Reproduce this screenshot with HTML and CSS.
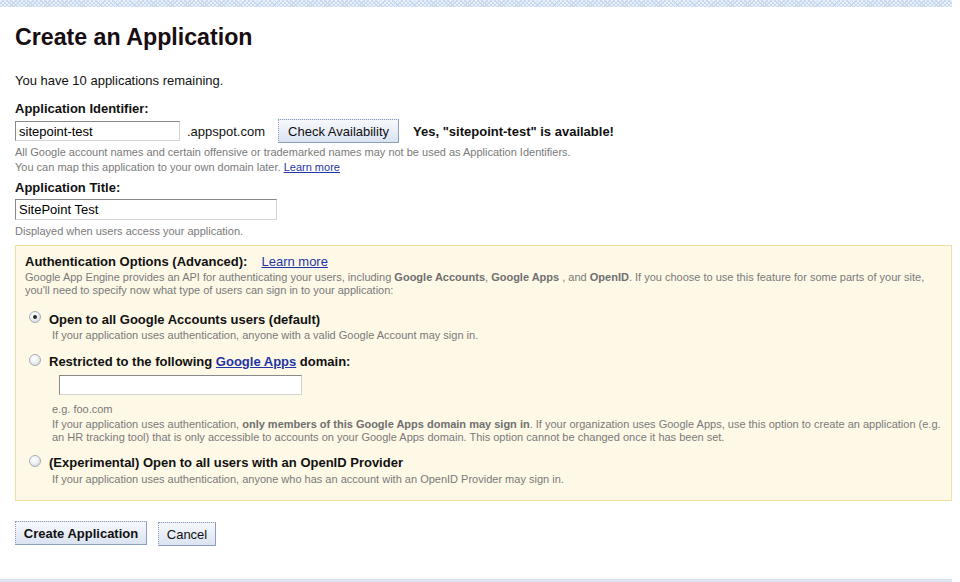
FILE: index.html
```html
<!DOCTYPE html>
<html lang="en">
<head>
<meta charset="utf-8">
<title>Create an Application</title>
<link rel="stylesheet" href="styles.css">
</head>
<body>
<div class="stripe"></div>
<main class="page">
  <h1 class="title">Create an Application</h1>
  <p class="remaining">You have 10 applications remaining.</p>

  <form class="form">
    <div class="field-label label-id">Application Identifier:</div>
    <div class="id-row">
      <input class="text-input id-input" type="text" value="sitepoint-test">
      <span class="suffix">.appspot.com</span>
      <button type="button" class="btn check-btn">Check Availability</button>
      <span class="available">Yes, "sitepoint-test" is available!</span>
    </div>
    <p class="hint hint-id">All Google account names and certain offensive or trademarked names may not be used as Application Identifiers.<br>You can map this application to your own domain later. <a href="#" class="link">Learn more</a></p>

    <div class="field-label label-title">Application Title:</div>
    <input class="text-input title-input" type="text" value="SitePoint Test">
    <p class="hint hint-title">Displayed when users access your application.</p>

    <section class="auth-box">
      <div class="auth-head"><span class="auth-title">Authentication Options (Advanced):</span><a href="#" class="link auth-learn">Learn more</a></div>
      <p class="auth-desc">Google App Engine provides an API for authenticating your users, including <b>Google Accounts</b>, <b>Google Apps</b> , and <b>OpenID</b>. If you choose to use this feature for some parts of your site,<br>you'll need to specify now what type of users can sign in to your application:</p>

      <div class="option opt-1">
        <span class="radio checked"></span>
        <span class="opt-label">Open to all Google Accounts users (default)</span>
      </div>
      <p class="opt-desc desc-1">If your application uses authentication, anyone with a valid Google Account may sign in.</p>

      <div class="option opt-2">
        <span class="radio"></span>
        <span class="opt-label">Restricted to the following <a href="#" class="link">Google Apps</a> domain:</span>
      </div>
      <input class="text-input domain-input" type="text" value="">
      <p class="opt-desc eg">e.g. foo.com</p>
      <p class="opt-desc desc-2">If your application uses authentication, <b>only members of this Google Apps domain may sign in</b>. If your organization uses Google Apps, use this option to create an application (e.g.<br>an HR tracking tool) that is only accessible to accounts on your Google Apps domain. This option cannot be changed once it has been set.</p>

      <div class="option opt-3">
        <span class="radio"></span>
        <span class="opt-label">(Experimental) Open to all users with an OpenID Provider</span>
      </div>
      <p class="opt-desc desc-3">If your application uses authentication, anyone who has an account with an OpenID Provider may sign in.</p>
    </section>

    <div class="actions">
      <button type="button" class="btn create-btn">Create Application</button>
      <button type="button" class="btn cancel-btn">Cancel</button>
    </div>
  </form>
  <div class="footer-band"></div>
</main>
</body>
</html>
```

FILE: styles.css
```css
* { box-sizing: border-box; }

html, body {
  margin: 0;
  padding: 0;
  background: #fff;
}

body {
  font-family: "Liberation Sans", Arial, sans-serif;
  font-size: 13px;
  line-height: 15px;
  color: #111;
  overflow: hidden;
}

.stripe {
  height: 7px;
  width: 952px;
  background-color: #eaf1fa;
  background-image:
    repeating-linear-gradient(45deg, #c6d9ee 0 1px, transparent 1px 3px),
    repeating-linear-gradient(-45deg, #c6d9ee 0 1px, transparent 1px 3px);
}

.page {
  width: 952px;
  padding-left: 15px;
}

.title {
  margin: 15px 0 0;
  font-size: 23.2px;
  line-height: 30px;
  font-weight: bold;
  color: #180d12;
}

.remaining {
  margin: 21px 0 0;
  color: #111;
}

.form { margin: 0; }

.field-label {
  font-weight: bold;
  color: #111;
}

.label-id { margin-top: 13px; }
.label-title { margin-top: 5px; }

.id-row {
  margin-top: 3px;
  height: 24px;
  display: flex;
  align-items: center;
}

.text-input {
  display: block;
  height: 20px;
  padding: 0 3px;
  margin: 0;
  font-family: "Liberation Sans", Arial, sans-serif;
  font-size: 13px;
  color: #000;
  background: #fff;
  border-style: solid;
  border-width: 1px;
  border-color: #8a8a8a #d4d4d4 #d4d4d4 #8a8a8a;
  border-radius: 0;
  outline: none;
}

.id-input { width: 165px; }

.suffix {
  margin-left: 7px;
  color: #111;
}

.btn {
  font-family: "Liberation Sans", Arial, sans-serif;
  font-size: 13px;
  color: #111;
  height: 24px;
  padding: 0;
  border: 1px solid #8d9dbd;
  border-top-style: dotted;
  border-left-style: dotted;
  border-radius: 0;
  background: linear-gradient(#f6f8fc 0%, #e9eef7 50%, #d9e3f0 100%);
  cursor: pointer;
}

.check-btn {
  width: 121px;
  margin-left: 13px;
}

.available {
  margin-left: 14px;
  font-weight: bold;
  color: #111;
}

.hint {
  margin: 2px 0 0;
  font-size: 11px;
  line-height: 15px;
  color: #7a7a7a;
}

.hint-title { margin-top: 4px; }

.link {
  color: #1f35a6;
  text-decoration: underline;
}

.title-input {
  width: 262px;
  height: 21px;
  margin-top: 4px;
}

.auth-box {
  margin-top: 6px;
  width: 937px;
  height: 256px;
  background: #fef8e6;
  border: 1px solid #f3dfa3;
  padding: 8px 9px 0;
}

.auth-head {
  display: flex;
  font-weight: bold;
}

.auth-title { color: #111; }

.auth-learn {
  margin-left: 14px;
  font-weight: normal;
}

.auth-desc {
  margin: 2px 0 0;
  font-size: 11px;
  line-height: 13px;
  color: #7a7a7a;
  white-space: nowrap;
}

.auth-desc b,
.opt-desc b { color: #707070; }

.option {
  display: flex;
  align-items: flex-start;
  padding-left: 4px;
  font-weight: bold;
}

.opt-label { margin-left: 8px; color: #111; }
.opt-label .link { color: #1f35a6; }

.opt-1 { margin-top: 15px; }
.opt-2 { margin-top: 12px; }
.opt-3 { margin-top: 11px; }

.radio {
  flex: none;
  width: 12px;
  height: 12px;
  margin-top: 0;
  border-radius: 50%;
  border: 1px solid #a9adb4;
  background: radial-gradient(circle at 40% 35%, #ffffff 0%, #eef0f3 45%, #c9ced6 100%);
  position: relative;
}

.opt-1 .radio { margin-top: -1px; }

.radio.checked::after {
  content: "";
  position: absolute;
  left: 3px;
  top: 3px;
  width: 4px;
  height: 4px;
  border-radius: 50%;
  background: #2b2b2b;
}

.opt-desc {
  margin: 0;
  margin-left: 27px;
  font-size: 11px;
  line-height: 13px;
  color: #7a7a7a;
  white-space: nowrap;
}

.desc-1 { margin-top: 2px; }
.eg { margin-top: 8px; }
.desc-2 { margin-top: 2px; }
.desc-3 { margin-top: 3px; }

.domain-input {
  width: 243px;
  height: 20px;
  margin: 6px 0 0 34px;
}

.actions {
  margin-top: 20px;
  display: flex;
  align-items: flex-start;
  gap: 11px;
}

.create-btn {
  width: 132px;
  font-weight: bold;
}

.cancel-btn {
  width: 58px;
  margin-top: 1px;
}

.footer-band {
  margin: 33px 0 0 -15px;
  width: 952px;
  height: 10px;
  background: #dbe6f2;
}
```
